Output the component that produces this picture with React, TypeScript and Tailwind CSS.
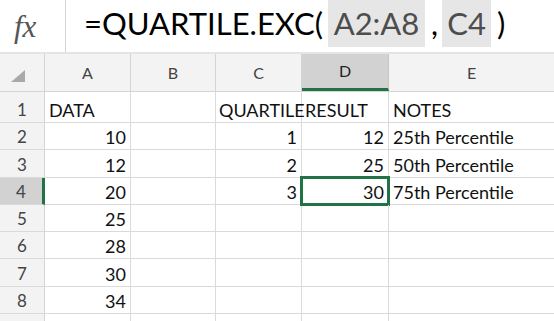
import React from 'react';

const cols = 'grid grid-cols-[45px_86px_85px_86px_87px_1fr]';

const rows: { a?: string; c?: string; d?: string; e?: string; head?: boolean }[] = [
    { a: 'DATA', c: 'QUARTILE', d: 'RESULT', e: 'NOTES', head: true },
    { a: '10', c: '1', d: '12', e: '25th Percentile' },
    { a: '12', c: '2', d: '25', e: '50th Percentile' },
    { a: '20', c: '3', d: '30', e: '75th Percentile' },
    { a: '25' },
    { a: '28' },
    { a: '30' },
    { a: '34' },
    {},
];

export default function App() {
    return (
        <div className="w-[554px] h-[321px] overflow-hidden bg-white text-[#111]" style={{ fontFamily: 'Lato, "Open Sans", sans-serif' }}>
            {/* formula bar */}
            <div className="flex h-[52px]">
                <div className="w-[66px] h-full flex items-center pl-[14px] border-r border-[#d4d4d4]">
                    <span className="text-[31px] italic text-[#555] leading-none" style={{ fontFamily: '"Liberation Serif", serif' }}>fx</span>
                </div>
                <div className="flex items-start pl-[18px] text-[31px] text-black leading-[47px]">
                    <span>=QUARTILE.EXC(</span>
                    <span className="ml-[5px] w-[97px] h-[47px] bg-[#e6e6e6] text-[#4d4d4d] text-center">A2:A8</span>
                    <span className="ml-[6px] mr-[4px]">,</span>
                    <span className="w-[49px] h-[47px] bg-[#e6e6e6] text-[#4d4d4d] text-center">C4</span>
                    <span className="ml-[6px]">)</span>
                </div>
            </div>
            <div className="h-[2px] bg-[#e4e4e4]" />

            {/* column headers */}
            <div className={`${cols} h-[38px] bg-[#f3f3f3] text-[16px] text-[#444] border-b border-[#d4d4d4]`}>
                <div className="flex items-end justify-center pb-[9px] border-r border-[#d4d4d4]">
                    <svg width="14" height="12" viewBox="0 0 14 12" className="ml-[-8px]">
                        <polygon points="14,0 14,12 0,12" fill="#a9a9a9" />
                    </svg>
                </div>
                <div className="flex items-center justify-center border-r border-[#d4d4d4]">A</div>
                <div className="flex items-center justify-center border-r border-[#d4d4d4]">B</div>
                <div className="flex items-center justify-center border-r border-[#d4d4d4]">C</div>
                <div className="flex items-center justify-center bg-[#d2d2d2] border-r border-[#c6c6c6] border-b-[3px] border-b-[#217346] text-[#222]">D</div>
                <div className="flex items-center justify-center">E</div>
            </div>

            {/* rows */}
            {rows.map((r, i) => {
                const n = i + 1;
                const sel = n === 4;
                return (
                    <div key={i} className={`${cols} ${i === 0 ? 'h-[31px]' : 'h-[27.3px]'} text-[18px] leading-[18px]`}>
                        <div className={`flex items-end justify-center pb-[3px] border-b border-[#d9d9d9] text-[17px] text-[#444] ${sel ? 'bg-[#d2d2d2] border-r-[3px] border-r-[#217346]' : 'bg-[#f3f3f3] border-r border-r-[#d4d4d4]'}`}>
                            {n <= 8 ? n : ''}
                        </div>
                        <div className={`flex items-end pb-[3px] border-r border-b border-[#dadada] ${r.head ? 'pl-[4px]' : 'justify-end pr-[4px]'}`}>{r.a}</div>
                        <div className="border-r border-b border-[#dadada]" />
                        <div className={`flex items-end pb-[3px] border-r border-b border-[#dadada] ${r.head ? 'pl-[3px]' : 'justify-end pr-[4px]'}`}>{r.c}</div>
                        <div className={`relative flex items-end pb-[3px] border-r border-b border-[#dadada] ${r.head ? 'pl-[3px]' : 'justify-end pr-[4px]'}`}>
                            {r.d}
                            {sel && <div className="absolute left-[-2px] top-[-2px] right-[-2px] bottom-[-2px] border-[3px] border-[#217346]" />}
                        </div>
                        <div className="flex items-end pb-[3px] pl-[4px] border-b border-[#dadada]">{r.e}</div>
                    </div>
                );
            })}
        </div>
    );
}
